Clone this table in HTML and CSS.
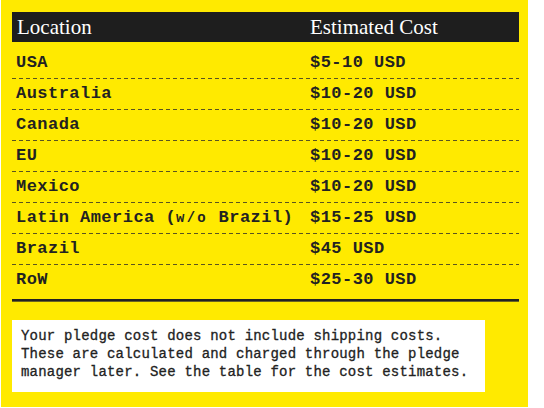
FILE: index.html
```html
<!DOCTYPE html>
<html>
<head>
<meta charset="utf-8">
<link rel="stylesheet" href="styles.css">
</head>
<body>
<div class="panel">
  <div class="table">
    <div class="head">
      <div class="hcell first">Location</div>
      <div class="hcell">Estimated Cost</div>
    </div>
    <div class="rows">
      <div class="row"><div class="cell">USA</div><div class="cell">$5-10 USD</div></div>
      <div class="row"><div class="cell">Australia</div><div class="cell">$10-20 USD</div></div>
      <div class="row"><div class="cell">Canada</div><div class="cell">$10-20 USD</div></div>
      <div class="row"><div class="cell">EU</div><div class="cell">$10-20 USD</div></div>
      <div class="row"><div class="cell">Mexico</div><div class="cell">$10-20 USD</div></div>
      <div class="row"><div class="cell">Latin America (<span class="small">w/o</span> Brazil)</div><div class="cell">$15-25 USD</div></div>
      <div class="row"><div class="cell">Brazil</div><div class="cell">$45 USD</div></div>
      <div class="row last"><div class="cell">RoW</div><div class="cell">$25-30 USD</div></div>
    </div>
    <div class="rule"></div>
  </div>
  <div class="note">Your pledge cost does not include shipping costs.<br>These are calculated and charged through the pledge<br>manager later. See the table for the cost estimates.</div>
</div>
</body>
</html>
```
FILE: styles.css
```css
html, body {
  margin: 0;
  padding: 0;
  background: #ffffff;
}
.panel {
  width: 527px;
  height: 407px;
  margin-left: 1px;
  box-sizing: border-box;
  background: #ffea00;
  padding: 12px 9px 0 11px;
}
.head {
  display: grid;
  grid-template-columns: 294px 1fr;
  height: 30px;
  background: #1e1e1e;
  color: #ffffff;
  font-family: "Liberation Serif", serif;
  font-size: 21px;
  line-height: 30px;
}
.hcell {
  padding-left: 4px;
}
.hcell.first {
  padding-left: 5px;
}
.rows {
  margin-top: 6px;
}
.row {
  display: grid;
  grid-template-columns: 294px 1fr;
  height: 31px;
  box-sizing: border-box;
  padding-bottom: 1px;
  background-image: repeating-linear-gradient(to right, #5a5420 0 4px, transparent 4px 7px);
  background-size: 100% 1px;
  background-position: left bottom;
  background-repeat: no-repeat;
  font-family: "Liberation Mono", "Courier New", monospace;
  font-weight: bold;
  font-size: 17px;
  letter-spacing: 0.47px;
  line-height: 30px;
  color: #222222;
}
.row.last {
  background-image: none;
}
.cell {
  padding-left: 4px;
  white-space: nowrap;
}
.small {
  font-size: 14px;
  letter-spacing: 2.2px;
  font-weight: bold;
}
.rule {
  margin-top: 3px;
  height: 2px;
  background: #222222;
  box-shadow: 0 1px 0 #6b6420;
}
.note {
  margin-top: 19px;
  width: 473px;
  height: 72px;
  box-sizing: border-box;
  background: #ffffff;
  padding: 7px 0 0 9px;
  font-family: "Liberation Mono", "Courier New", monospace;
  font-size: 14px;
  letter-spacing: 0.2px;
  line-height: 18px;
  color: #222222;
  -webkit-text-stroke: 0.3px #222222;
  white-space: nowrap;
}
```
